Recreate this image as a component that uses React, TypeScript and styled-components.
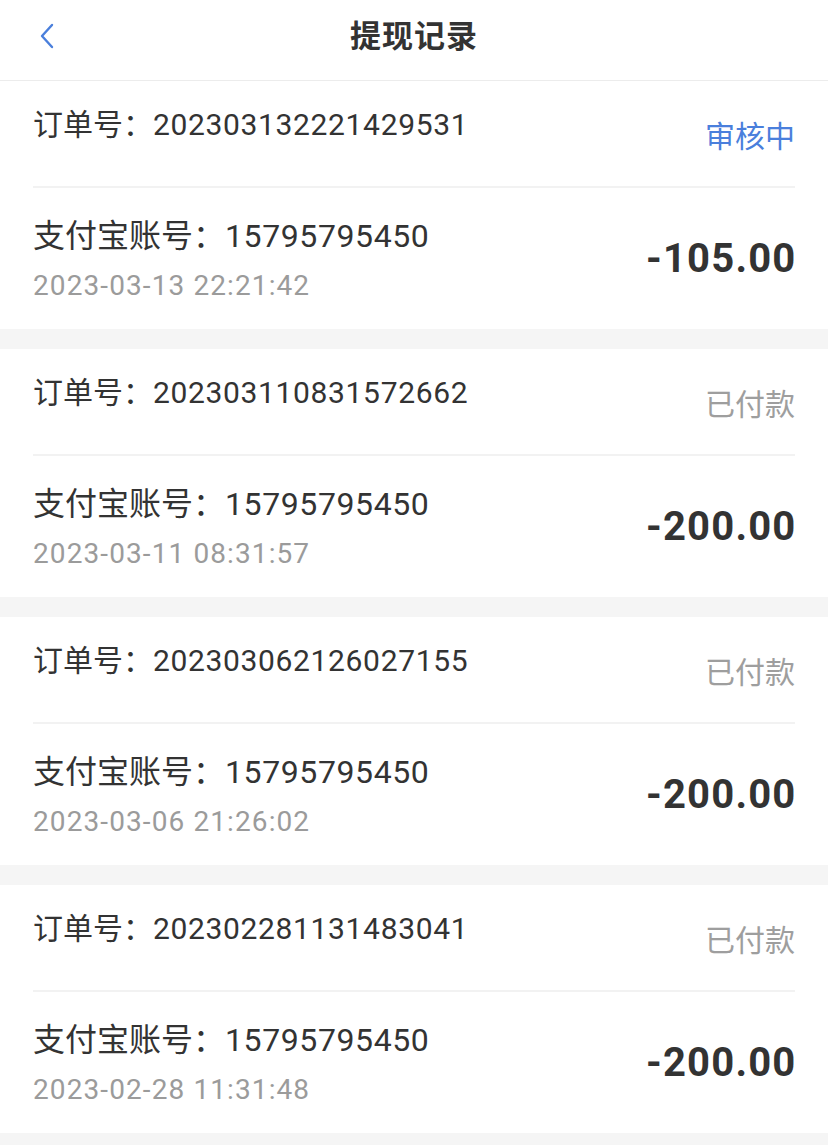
import styled, { createGlobalStyle } from 'styled-components'

const GlobalStyle = createGlobalStyle`
  html, body {
    margin: 0;
    padding: 0;
    background: #f5f5f5;
  }
  body {
    font-family: Roboto, "Noto Sans CJK SC", sans-serif;
    color: #333;
  }
`

const Page = styled.div`
  width: 828px;
  min-height: 1145px;
  background: #f5f5f5;
`

const Header = styled.div`
  height: 80px;
  background: #fff;
  border-bottom: 1px solid #ececec;
  display: flex;
  align-items: center;
  justify-content: center;
  position: relative;
`

const BackButton = styled.div`
  position: absolute;
  left: 38px;
  top: 23px;
  width: 20px;
  height: 26px;
  display: flex;
`

const Title = styled.h1`
  margin: 0;
  font-size: 31px;
  font-weight: 700;
  color: #333;
  letter-spacing: 1px;
  font-family: "Noto Sans CJK SC", sans-serif;
  margin-top: -14px;
`

const List = styled.div`
  display: flex;
  flex-direction: column;
  gap: 20px;
`

const Card = styled.div`
  background: #fff;
  padding: 0 33px;
  height: 248px;
  display: flex;
  flex-direction: column;
`

const TopRow = styled.div`
  height: 107px;
  display: flex;
  justify-content: space-between;
  align-items: flex-start;
  padding-top: 26px;
  box-sizing: border-box;
  border-bottom: 2px solid #f2f2f2;
`

const MainText = styled.div<{ $size: number }>`
  font-size: ${p => p.$size}px;
  line-height: 36px;
  color: #333;
  white-space: nowrap;
`

const Num = styled.span<{ $spacing: number }>`
  letter-spacing: ${p => p.$spacing}px;
`

const Status = styled.div<{ $pending?: boolean }>`
  font-size: 30px;
  line-height: 36px;
  margin-top: 9px;
  color: ${p => (p.$pending ? '#4a7fdc' : '#9e9e9e')};
  font-family: "Noto Sans CJK SC", sans-serif;
`

const BottomRow = styled.div`
  flex: 1;
  display: flex;
  justify-content: space-between;
  align-items: flex-start;
  padding-top: 30px;
`

const InfoCol = styled.div`
  display: flex;
  flex-direction: column;
`

const DateText = styled.div`
  font-size: 28px;
  line-height: 36px;
  margin-top: 14px;
  color: #9b9b9b;
  letter-spacing: 1.1px;
`

const Amount = styled.div`
  font-size: 40px;
  font-weight: 700;
  line-height: 48px;
  margin-top: 17px;
  margin-right: -1.5px;
  color: #333;
  letter-spacing: 1.2px;
`

const records = [
  { order: '202303132221429531', status: '审核中', pending: true, account: '15795795450', time: '2023-03-13 22:21:42', amount: '-105.00' },
  { order: '202303110831572662', status: '已付款', pending: false, account: '15795795450', time: '2023-03-11 08:31:57', amount: '-200.00' },
  { order: '202303062126027155', status: '已付款', pending: false, account: '15795795450', time: '2023-03-06 21:26:02', amount: '-200.00' },
  { order: '202302281131483041', status: '已付款', pending: false, account: '15795795450', time: '2023-02-28 11:31:48', amount: '-200.00' },
]

function App() {
  return (
    <Page>
      <GlobalStyle />
      <Header>
        <BackButton>
          <svg width="20" height="26" viewBox="0 0 20 26" fill="none">
            <polyline points="14,2 4,13 14,24" stroke="#4a7fdc" strokeWidth="2.4" strokeLinecap="round" strokeLinejoin="round" />
          </svg>
        </BackButton>
        <Title>提现记录</Title>
      </Header>
      <List>
        {records.map((r, i) => (
          <Card key={i}>
            <TopRow>
              <MainText $size={30}>订单号：<Num $spacing={0.65}>{r.order}</Num></MainText>
              <Status $pending={r.pending}>{r.status}</Status>
            </TopRow>
            <BottomRow>
              <InfoCol>
                <MainText $size={32}>支付宝账号：<Num $spacing={0.6}>{r.account}</Num></MainText>
                <DateText>{r.time}</DateText>
              </InfoCol>
              <Amount>{r.amount}</Amount>
            </BottomRow>
          </Card>
        ))}
      </List>
    </Page>
  )
}

export default App
